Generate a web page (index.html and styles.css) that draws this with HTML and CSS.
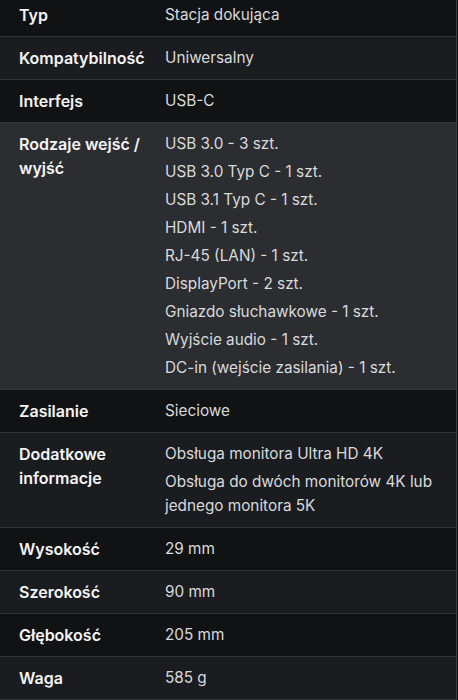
FILE: index.html
```html
<!DOCTYPE html>
<html lang="pl">
<head>
<meta charset="utf-8">
<link rel="stylesheet" href="styles.css">
</head>
<body>
<div class="specs">
  <div class="row odd"><div class="label">Typ</div><div class="value"><div class="item">Stacja dokująca</div></div></div>
  <div class="row even"><div class="label">Kompatybilność</div><div class="value"><div class="item">Uniwersalny</div></div></div>
  <div class="row odd"><div class="label">Interfejs</div><div class="value"><div class="item">USB-C</div></div></div>
  <div class="row active"><div class="label">Rodzaje wejść / wyjść</div><div class="value">
    <div class="item">USB 3.0 - 3 szt.</div>
    <div class="item">USB 3.0 Typ C - 1 szt.</div>
    <div class="item">USB 3.1 Typ C - 1 szt.</div>
    <div class="item">HDMI - 1 szt.</div>
    <div class="item">RJ-45 (LAN) - 1 szt.</div>
    <div class="item">DisplayPort - 2 szt.</div>
    <div class="item">Gniazdo słuchawkowe - 1 szt.</div>
    <div class="item">Wyjście audio - 1 szt.</div>
    <div class="item">DC-in (wejście zasilania) - 1 szt.</div>
  </div></div>
  <div class="row odd"><div class="label">Zasilanie</div><div class="value"><div class="item">Sieciowe</div></div></div>
  <div class="row even"><div class="label">Dodatkowe informacje</div><div class="value">
    <div class="item">Obsługa monitora Ultra HD 4K</div>
    <div class="item">Obsługa do dwóch monitorów 4K lub jednego monitora 5K</div>
  </div></div>
  <div class="row odd"><div class="label">Wysokość</div><div class="value"><div class="item">29 mm</div></div></div>
  <div class="row even"><div class="label">Szerokość</div><div class="value"><div class="item">90 mm</div></div></div>
  <div class="row odd"><div class="label">Głębokość</div><div class="value"><div class="item">205 mm</div></div></div>
  <div class="row even"><div class="label">Waga</div><div class="value"><div class="item">585 g</div></div></div>
</div>
</body>
</html>
```
FILE: styles.css
```css
html, body {
  margin: 0;
  padding: 0;
  background: #111214;
}
body {
  font-family: Inter, "Noto Sans", sans-serif;
  font-size: 15px;
  line-height: 24px;
  color: #d9dadc;
}
.specs {
  margin-top: -6px;
  width: 456px;
  border-right: 1px solid #3a3c40;
}
.row {
  display: grid;
  grid-template-columns: 146px 1fr;
  padding: 9px 12px 9px 19px;
  border-bottom: 1px solid #303236;
}
.odd { background: #111214; }
.even { background: #1b1c1f; }
.active { background: #2b2d31; }
.label {
  font-size: 16px;
  font-weight: 600;
  color: #f4f4f5;
  padding-right: 8px;
}
.value {
  display: flex;
  flex-direction: column;
  gap: 4px;
  font-size: 15.3px;
}
```
